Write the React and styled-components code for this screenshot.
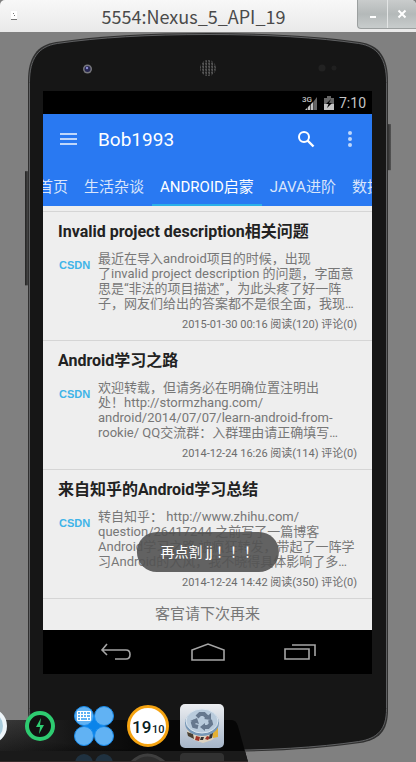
import React from "react";
import styled, { createGlobalStyle } from "styled-components";

const GlobalStyle = createGlobalStyle`
  * { box-sizing: border-box; }
  body {
    margin: 0;
    background: #808080;
    font-family: Roboto, "Noto Sans CJK SC", sans-serif;
  }
  button {
    border: 0;
    padding: 0;
    background: none;
    color: inherit;
    font: inherit;
    display: flex;
    align-items: center;
    justify-content: center;
  }
  a { color: inherit; text-decoration: none; }
  svg { display: block; }
`;

const EmulatorWindow = styled.div`
  position: relative;
  overflow: hidden;
  border-bottom: 1px solid #e8e8e8;
`;

const TitleBar = styled.header`
  display: flex;
  height: 32px;
  background: linear-gradient(#f8f8f8, #e9e9e9);
  border-radius: 5px 5px 0 0;
  overflow: hidden;
`;

const AppMark = styled.div`
  width: 30px;
  padding: 10px 0 0 10px;
`;

const WindowTitle = styled.h1`
  flex: 1;
  margin: 0;
  text-align: center;
  font: 400 18px/32px "Noto Sans CJK SC", "Noto Sans", sans-serif;
  color: #4a4a4a;
  white-space: nowrap;
`;

const WindowButtons = styled.div`
  display: flex;
  height: 29px;
  background: linear-gradient(#c9cccc, #b4b9b9 50%, #c8cccc);
  border: solid #9b9f9f;
  border-width: 0 0 1px 1px;
  border-radius: 0 0 0 4px;
`;

const WindowButton = styled.button`
  width: 29px;
  & + & { border-left: 1px solid #e3e5e5; }
`;

const Phone = styled.main`
  position: relative;
  margin: 1px 28px 10px;
  padding: 58px 16px 78px 15px;
`;

const PhoneBody = styled.svg`
  position: absolute;
  inset: 0;
  width: 100%;
  height: 100%;
  overflow: visible;
`;

const Screen = styled.div`
  position: relative;
  background: #eee;
  overflow: hidden;
`;

const StatusBar = styled.div`
  display: flex;
  align-items: center;
  justify-content: flex-end;
  gap: 5px;
  height: 23px;
  padding-right: 6px;
  background: #000;
  color: #c4c4c4;
  font-size: 14px;
`;

const Toolbar = styled.div`
  display: flex;
  align-items: center;
  height: 50px;
  padding-left: 17px;
  background: #2979f2;
  color: #fff;
`;

const ToolbarTitle = styled.h2`
  flex: 1;
  margin: 0 0 0 21px;
  font-size: 19px;
  font-weight: 400;
`;

const ToolbarButton = styled.button`
  height: 30px;
  width: ${(p) => p.$width}px;
`;

const Tabs = styled.nav`
  display: flex;
  height: 42px;
  background: #2979f2;
  overflow: hidden;
`;

const Tab = styled.button`
  && {
    flex: none;
    padding: 2px 8px 0;
    font-size: 15px;
    color: ${(p) => (p.$active ? "#fff" : "#d9e5fb")};
    border-bottom: 2px solid ${(p) => (p.$active ? "#2bb0e8" : "transparent")};
  }
  &&:first-child { margin-left: -13px; }
`;

const List = styled.div`
  margin-top: 5px;
  border-top: 1px solid #d5d5d5;
`;

const Article = styled.article`
  padding: 10px 15px 7px;
  border-bottom: 1px solid #d5d5d5;
`;

const ArticleTitle = styled.h3`
  margin: 0 0 9px;
  font-size: 16px;
  line-height: 20px;
  font-weight: 700;
  color: #222;
  white-space: nowrap;
`;

const ArticleBody = styled.div`
  display: flex;
`;

const Source = styled.span`
  width: 40px;
  padding-left: 1px;
  font: 700 11px/28px "Liberation Sans", sans-serif;
  color: #3fb4e8;
`;

const Excerpt = styled.p`
  margin: 0;
  flex: 1;
  font-size: 13px;
  line-height: 15px;
  color: #777;
  white-space: nowrap;
`;

const Line = styled.span`
  display: block;
`;

const Meta = styled.div`
  margin-top: 6px;
  text-align: right;
  font-size: 11px;
  line-height: 16px;
  color: #6c6c6c;
`;

const ListEnd = styled.div`
  height: 31px;
  text-align: center;
  font-size: 15px;
  line-height: 31px;
  color: #777;
`;

const Toast = styled.div`
  position: absolute;
  left: 50%;
  bottom: 102px;
  transform: translateX(-50%);
  padding: 0 24px;
  border-radius: 20px;
  background: rgba(82, 82, 82, 0.9);
  color: #fff;
  font: 14px/40px Roboto, "Noto Sans CJK TC", sans-serif;
  white-space: pre;
`;

const NavBar = styled.nav`
  display: flex;
  justify-content: center;
  height: 44px;
  background: #000;
`;

const NavButton = styled.button`
  width: 92px;
`;

const Dock = styled.footer`
  position: absolute;
  left: 0;
  bottom: 0;
  width: 248px;
  height: 58px;
`;

const DockPlate = styled.svg`
  position: absolute;
  left: 0;
  bottom: 0;
`;

const DockItems = styled.div`
  position: relative;
  display: flex;
  align-items: center;
  height: 44px;
  gap: 11px;
  margin-left: -34px;
`;

const DockButton = styled.button`
  flex: none;
`;

const ARTICLES = [
  {
    title: "Invalid project description相关问题",
    lines: ["最近在导入android项目的时候，出现", "了invalid project description 的问题，字面意", "思是“非法的项目描述”，为此头疼了好一阵", "子，网友们给出的答案都不是很全面，我现…"],
    meta: "2015-01-30 00:16 阅读(120) 评论(0)",
  },
  {
    title: "Android学习之路",
    lines: ["欢迎转载，但请务必在明确位置注明出", "处！http://stormzhang.com/", "android/2014/07/07/learn-android-from-", "rookie/ QQ交流群：入群理由请正确填写…"],
    meta: "2014-12-24 16:26 阅读(114) 评论(0)",
  },
  {
    title: "来自知乎的Android学习总结",
    lines: ["转自知乎： http://www.zhihu.com/", "question/26417244 之前写了一篇博客", "Android学习之路 被疯狂转发，带起了一阵学", "习Android的大风，我不晓得具体影响了多…"],
    meta: "2014-12-24 14:42 阅读(350) 评论(0)",
  },
];

const TABS = ["首页", "生活杂谈", "ANDROID启蒙", "JAVA进阶", "数据库"];

const OUTLINE = "M0 48C0 24 9 12 28 9Q90 0 180 0T332 9C351 12 360 24 360 48V676C360 697 351 706 332 709Q270 718 180 718T28 709C9 706 0 697 0 676Z";

function PhoneShell() {
  return (
    <PhoneBody viewBox="0 0 360 718" preserveAspectRatio="none" aria-hidden="true">
      <defs>
        <linearGradient id="key" x1="0" x2="1"><stop stopColor="#222" /><stop offset="1" stopColor="#555" /></linearGradient>
        <pattern id="mesh" width="3" height="3" patternUnits="userSpaceOnUse">
          <rect width="3" height="3" fill="#151515" /><path d="M0 .5h2M1.500 1v1.500M0 2h1" stroke="#707070" strokeWidth=".7" />
        </pattern>
      </defs>
      <rect x="-3" y="138" width="4" height="114" fill="url(#key)" />
      <rect x="359" y="91" width="4" height="46" fill="url(#key)" />
      <path d={OUTLINE} fill="#303030" />
      <path d={OUTLINE} fill="#161616" stroke="#606163" strokeWidth="1" transform="translate(1.5 1.5) scale(.9917 .9958)" />
      <circle cx="59.500" cy="36" r="4.500" fill="#77777c" />
      <circle cx="59.500" cy="36" r="3" fill="#262650" />
      <circle cx="59" cy="35" r="1.200" fill="#8b8bd0" />
      <circle cx="180" cy="35" r="8" fill="url(#mesh)" />
      <circle cx="294" cy="35" r="3.500" fill="#222" />
      <circle cx="306" cy="35" r="2.500" fill="#202020" />
    </PhoneBody>
  );
}

export default function App() {
  return (
    <EmulatorWindow>
      <GlobalStyle />
      <TitleBar>
        <AppMark>
          <svg width="8" height="10"><path d="M1 1h6v8H1z" fill="#fff" /><path d="M1 9.500h6" stroke="#777" /><path d="M3 3h1v1H3zM4 5h1v1H4z" fill="#777" /></svg>
        </AppMark>
        <WindowTitle>5554:Nexus_5_API_19</WindowTitle>
        <WindowButtons>
          <WindowButton aria-label="Minimize">
            <svg width="8" height="10"><path d="M1 8h6" stroke="#fff" strokeWidth="2" /></svg>
          </WindowButton>
          <WindowButton aria-label="Close">
            <svg width="10" height="10"><path d="m1.500 1.500 7 7m0-7-7 7" stroke="#fff" strokeWidth="2" /></svg>
          </WindowButton>
        </WindowButtons>
      </TitleBar>

      <Phone>
        <PhoneShell />
        <Screen>
          <StatusBar>
            <svg width="17" height="16" viewBox="0 0 17 16">
              <text x="0" y="7" fontSize="8" fontWeight="500" fill="#c4c4c4">3G</text>
              <path d="M3 15 12 6v9z" fill="#c4c4c4" />
              <path d="M12 6l3-4v13h-3z" fill="#666" />
              <path d="M5.500 10v5M8.500 8v7M11.500 4v11" stroke="#000" strokeWidth=".6" />
            </svg>
            <svg width="10" height="14" viewBox="0 0 10 14">
              <path d="M3 0h4v2h3v6H0V2h3z" fill="#666" />
              <path d="M0 8h10v6H0z" fill="#c4c4c4" />
              <path d="M7 3 2 8h2.500L3 12l5-5H5z" fill="#000" />
            </svg>
            <span>7:10</span>
          </StatusBar>
          <Toolbar>
            <ToolbarButton $width={17} aria-label="Menu">
              <svg width="17" height="14"><path d="M0 2h17M0 7h17M0 12h17" stroke="#bfd7fb" strokeWidth="2" /></svg>
            </ToolbarButton>
            <ToolbarTitle>Bob1993</ToolbarTitle>
            <ToolbarButton $width={44} aria-label="Search">
              <svg width="18" height="18" viewBox="0 0 18 18" fill="none" stroke="#fff">
                <circle cx="7" cy="7" r="5" strokeWidth="2" /><path d="m10.500 10.500 6 6" strokeWidth="2.400" />
              </svg>
            </ToolbarButton>
            <ToolbarButton $width={44} aria-label="More options">
              <svg width="4" height="16" fill="#bfd7fb"><circle cx="2" cy="2" r="2" /><circle cx="2" cy="8" r="2" /><circle cx="2" cy="14" r="2" /></svg>
            </ToolbarButton>
          </Toolbar>
          <Tabs>
            {TABS.map((t, i) => <Tab key={t} $active={i === 2}>{t}</Tab>)}
          </Tabs>
          <List>
            {ARTICLES.map((a) => (
              <Article key={a.title}>
                <ArticleTitle><a href="#article">{a.title}</a></ArticleTitle>
                <ArticleBody>
                  <Source>CSDN</Source>
                  <Excerpt>{a.lines.map((l) => <Line key={l}>{l}</Line>)}</Excerpt>
                </ArticleBody>
                <Meta>{a.meta}</Meta>
              </Article>
            ))}
          </List>
          <ListEnd>客官请下次再来</ListEnd>
          <NavBar>
            <NavButton aria-label="Back">
              <svg width="32" height="18" viewBox="0 0 32 18" fill="none" stroke="#a5a5a5" strokeWidth="1.600"><path d="M7 1 2 7l5 5M2 7h24q4 0 4 4.500T26 16H15" /></svg>
            </NavButton>
            <NavButton aria-label="Home">
              <svg width="34" height="18" viewBox="0 0 34 18" fill="none" stroke="#a5a5a5" strokeWidth="1.600"><path d="M1 17V7l16-6 16 6v10z" /></svg>
            </NavButton>
            <NavButton aria-label="Recent apps">
              <svg width="32" height="16" viewBox="0 0 32 16" fill="none" stroke="#a5a5a5" strokeWidth="1.600"><path d="M1 5h24v10H1zM8 1h23v11" /></svg>
            </NavButton>
          </NavBar>
          <Toast role="status">再点割 jj！！！</Toast>
        </Screen>
      </Phone>

      <Dock>
        <DockPlate width="248" height="42" viewBox="0 0 248 42" aria-hidden="true">
          <defs>
            <linearGradient id="dock" x1="0" x2="1"><stop stopColor="#2c2c2c" /><stop offset=".3" stopColor="#161616" /><stop offset=".6" stopColor="#060606" /></linearGradient>
            <linearGradient id="shade" x1="0" x2="0" y1="0" y2="1"><stop stopColor="#555" stopOpacity=".3" /><stop offset="1" stopColor="#000" stopOpacity=".3" /></linearGradient>
          </defs>
          <path d="M0 0H232Q236 0 238 6L248 42H0Z" fill="url(#dock)" />
          <path d="M0 0H30Q32 22 70 24 120 31 210 32H0Z" fill="url(#shade)" />
          <path d="M0 31H245L248 42H0Z" fill="#1a1a1a" />
          <g opacity=".25">
            <circle cx="84" cy="43" r="9" fill="#2f78b0" /><circle cx="104" cy="43" r="9" fill="#2f78b0" />
            <path d="M132 42q15-14 32 0" stroke="#aaa" strokeWidth="3" fill="#666" />
            <rect x="180" y="33" width="44" height="12" rx="4" fill="#777" />
          </g>
          <path d="M0 41.500H248" stroke="#352b2b" />
        </DockPlate>
        <DockItems>
          <DockButton aria-label="Files">
            <svg width="42" height="42" viewBox="0 0 42 42"><circle cx="23" cy="21" r="16" fill="#a9ccdc" stroke="#eef5f9" strokeWidth="4" /></svg>
          </DockButton>
          <DockButton aria-label="Power">
            <svg width="42" height="30" viewBox="0 0 42 30"><circle cx="21" cy="15" r="13" fill="#111" stroke="#2ecc71" strokeWidth="4" /><path d="m22 7-5 9h4l-1 7 5-9h-4z" fill="#2ecc71" /></svg>
          </DockButton>
          <DockButton aria-label="Input method">
            <svg width="44" height="40" viewBox="0 0 44 40">
              <path d="M12 10h20v20H12z" fill="#0a84ea" />
              <g fill="#61b2f3" stroke="#168cee"><circle cx="12" cy="10" r="9.500" /><circle cx="32" cy="10" r="9.500" /><circle cx="12" cy="30" r="9.500" /><circle cx="32" cy="30" r="9.500" /></g>
              <path d="M5.500 5.500h13v9h-13zM5 8.500h14M5 11.500h14M8.500 5v7M11.500 5v7M14.500 5v7M8.500 12v3M15.500 12v3" fill="none" stroke="#fff" />
            </svg>
          </DockButton>
          <DockButton aria-label="Clock">
            <svg width="42" height="42" viewBox="0 0 42 42">
              <circle cx="21" cy="21" r="19.500" fill="#fff" stroke="#f5a310" strokeWidth="3" />
              <text x="5" y="28" fontSize="17" fontWeight="500" fill="#08201f">19</text>
              <text x="25" y="28" fontSize="11" fontWeight="500" fill="#08201f">10</text>
            </svg>
          </DockButton>
          <DockButton aria-label="Trash">
            <svg width="44" height="44" viewBox="0 0 44 44">
              <defs><linearGradient id="tile" x1="0" x2="0" y1="0" y2="1"><stop stopColor="#eceef1" /><stop offset="1" stopColor="#a6b5c8" /></linearGradient></defs>
              <rect width="44" height="44" rx="5" fill="url(#tile)" />
              <path d="M6 20l2 11 6 5 9 3 9-3 5-5 1-11z" fill="#ddd2c0" />
              <path d="m32 26 6-3v10l-5 1z" fill="#e4b032" /><path d="m7 28 6 2 1 5-6-3z" fill="#4a4034" />
              <path d="m16 32 4 1-1 4-4-1zM27 32l3 1-2 3-3-1z" fill="#9f3428" /><path d="m21 33 3 0-1 3h-3zM30 28l3 1-1 5-3 1z" fill="#333" />
              <ellipse cx="22" cy="19" rx="17" ry="13" fill="#7898b7" />
              <ellipse cx="22" cy="17" rx="16" ry="12" fill="#b9cbdc" stroke="#dce6ef" />
              <g fill="none" stroke="#66788e" strokeWidth="4"><path d="m17 13 3-3h4l3 3" /><path d="m30 16 1 4-3 3h-3" /><path d="m18 23-4-1-1-3 2-2" /></g>
              <path d="m24 15 7 1V9zM25 19v8l-5-4zM10 17l7-3 2 6z" fill="#66788e" />
            </svg>
          </DockButton>
        </DockItems>
      </Dock>
    </EmulatorWindow>
  );
}
